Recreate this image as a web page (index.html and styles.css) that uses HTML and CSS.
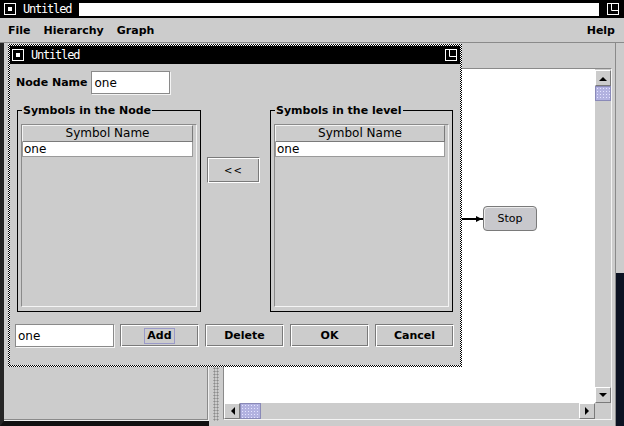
FILE: index.html
```html
<!DOCTYPE html>
<html>

<head>
  <link rel="stylesheet" href="styles.css">
</head>

<body>
  <div class="frame">
    <div class="titlebar">
      <svg class="win-icon" width="12" height="12" viewBox="0 0 12 12">
        <rect x="0.5" y="0.5" width="11" height="11" fill="#000" stroke="#fff" />
        <rect x="4" y="4" width="4" height="4" fill="#fff" />
      </svg>
      <span class="title-text">Untitled</span>
      <span class="title-field"></span>
      <svg class="max-icon" width="12" height="12" viewBox="0 0 12 12">
        <rect x="0.5" y="0.5" width="11" height="11" fill="none" stroke="#fff" />
        <path d="M4.5 0.5V7.5H11.5" fill="none" stroke="#fff" />
      </svg>
    </div>

    <div class="menubar">
      <span>File</span>
      <span>Hierarchy</span>
      <span>Graph</span>
      <span class="menu-help">Help</span>
    </div>

    <div class="workspace">
      <div class="left-pane"></div>
      <div class="splitter"><div class="grip"></div></div>
      <div class="right-pane">
        <div class="toolbar"></div>
        <div class="viewport">
          <div class="view-row">
            <div class="canvas">
              <div class="edge"></div>
              <div class="node">Stop</div>
            </div>
            <div class="vscroll">
              <div class="arrow-btn">
                <svg width="8" height="5" viewBox="0 0 8 5"><path d="M0 5L4 1L8 5Z" fill="#000" /></svg>
              </div>
              <div class="thumb thumb-v"></div>
              <div class="track"></div>
              <div class="arrow-btn">
                <svg width="8" height="5" viewBox="0 0 8 5"><path d="M0 0L4 4L8 0Z" fill="#000" /></svg>
              </div>
            </div>
          </div>
          <div class="hscroll-row">
            <div class="hscroll">
              <div class="arrow-btn">
                <svg width="5" height="8" viewBox="0 0 5 8"><path d="M5 0L1 4L5 8Z" fill="#000" /></svg>
              </div>
              <div class="thumb thumb-h"></div>
              <div class="track"></div>
              <div class="arrow-btn">
                <svg width="5" height="8" viewBox="0 0 5 8"><path d="M0 0L4 4L0 8Z" fill="#000" /></svg>
              </div>
            </div>
            <div class="corner"></div>
          </div>
        </div>
      </div>
      <div class="right-frame"></div>
    </div>
  </div>

  <div class="dialog">
    <div class="dialog-inner">
      <div class="dialog-title">
        <svg class="win-icon" width="12" height="12" viewBox="0 0 12 12">
          <rect x="0.5" y="0.5" width="11" height="11" fill="#000" stroke="#fff" />
          <rect x="4" y="4" width="4" height="4" fill="#fff" />
        </svg>
        <span class="title-text">Untitled</span>
        <svg class="max-icon" width="12" height="12" viewBox="0 0 12 12">
          <rect x="0.5" y="0.5" width="11" height="11" fill="none" stroke="#fff" />
          <path d="M4.5 0.5V7.5H11.5" fill="none" stroke="#fff" />
        </svg>
      </div>

      <div class="name-row">
        <label for="node-name">Node Name</label>
        <input type="text" id="node-name" class="field name-field" value="one">
      </div>

      <div class="groups">
        <fieldset class="group">
          <legend>Symbols in the Node</legend>
          <div class="list">
            <div class="list-head">Symbol Name</div>
            <div class="list-row">one</div>
          </div>
        </fieldset>

        <button class="btn move-btn">&lt;&lt;</button>

        <fieldset class="group group-level">
          <legend>Symbols in the level</legend>
          <div class="list">
            <div class="list-head">Symbol Name</div>
            <div class="list-row">one</div>
          </div>
        </fieldset>
      </div>

      <div class="action-row">
        <input type="text" class="field symbol-field" value="one">
        <button class="btn"><span class="focus">Add</span></button>
        <button class="btn">Delete</button>
        <button class="btn">OK</button>
        <button class="btn">Cancel</button>
      </div>
    </div>
  </div>
</body>

</html>
```

FILE: styles.css
```css
body {
  margin: 0;
  width: 624px;
  height: 426px;
  overflow: hidden;
  position: relative;
  background: #cccccc;
  font-family: "DejaVu Sans", sans-serif;
  color: #000;
}

.frame {
  display: flex;
  flex-direction: column;
  height: 426px;
}

/* window title bars */

.titlebar,
.dialog-title {
  height: 18px;
  background: #000;
  color: #fff;
  display: flex;
  align-items: center;
}

.win-icon {
  margin-left: 4px;
  flex-shrink: 0;
}

.title-text {
  font-family: "DejaVu Sans Mono", monospace;
  font-size: 12px;
  letter-spacing: -1.2px;
  margin-left: 7px;
  width: 56px;
}

.title-field {
  width: 520px;
  height: 13px;
  background: #fff;
}

.max-icon {
  margin-left: 8px;
}

/* menu */

.menubar {
  height: 24px;
  border-bottom: 1px solid #8a8a8a;
  display: flex;
  align-items: center;
  gap: 13px;
  padding: 0 9px 0 8px;
  font-size: 11px;
  font-weight: bold;
}

.menu-help {
  margin-left: auto;
}

/* main window body */

.workspace {
  flex: 1;
  display: flex;
}

.left-pane {
  width: 205px;
  border-left: 4px solid #262626;
  border-bottom: 5px solid #111;
  box-shadow: inset -1px -1px #f0f0f0, inset -2px -2px #8a8a8a;
}

.splitter {
  width: 13px;
  display: flex;
  justify-content: center;
  padding-bottom: 5px;
}

.grip {
  width: 6px;
  background-image: radial-gradient(#8a8a8a 45%, transparent 50%);
  background-size: 3px 3px;
}

.right-pane {
  flex: 1;
  display: flex;
  flex-direction: column;
  padding: 0 3px 6px 1px;
  border-right: 1px solid #8a8a8a;
}

.toolbar {
  height: 25px;
}

.viewport {
  flex: 1;
  display: flex;
  flex-direction: column;
  border: 1px solid;
  border-color: #8a8a8a #f4f4f4 #f4f4f4 #8a8a8a;
}

.view-row {
  flex: 1;
  display: flex;
}

.canvas {
  flex: 1;
  background: #fff;
  position: relative;
}

.edge {
  position: absolute;
  left: 200px;
  top: 149px;
  width: 59px;
  height: 2px;
  background: #000;
}

.edge::after {
  content: "";
  position: absolute;
  right: 1px;
  top: -2px;
  border-left: 6px solid #000;
  border-top: 3px solid transparent;
  border-bottom: 3px solid transparent;
}

.node {
  position: absolute;
  left: 259px;
  top: 137px;
  width: 54px;
  height: 25px;
  box-sizing: border-box;
  border: 1px solid #7a7a7a;
  border-radius: 4px;
  background: #c8c8cc;
  box-shadow: inset 1px 1px #ececec;
  display: flex;
  align-items: center;
  justify-content: center;
  font-size: 11px;
}

/* scrollbars */

.vscroll {
  width: 16px;
  display: flex;
  flex-direction: column;
  padding-top: 1px;
}

.hscroll-row {
  height: 16px;
  display: flex;
}

.hscroll {
  flex: 1;
  display: flex;
}

.corner {
  width: 16px;
}

.arrow-btn {
  width: 16px;
  height: 16px;
  box-sizing: border-box;
  border: 1px solid;
  border-color: #fff #7a7a7a #7a7a7a #fff;
  display: flex;
  align-items: center;
  justify-content: center;
  flex-shrink: 0;
}

.track {
  flex: 1;
}

.thumb {
  box-sizing: border-box;
  border: 1px solid #8a8ab8;
  background-color: #b2b2e0;
  background-image: radial-gradient(#e4e4ff 35%, transparent 45%);
  background-size: 3px 3px;
}

.thumb-v {
  height: 15px;
}

.thumb-h {
  width: 21px;
}

.right-frame {
  width: 8px;
  background: linear-gradient(#cccccc 0 60%, #0c1222 60%);
}

/* dialog */

.dialog {
  position: absolute;
  left: 8px;
  top: 44px;
  width: 454px;
  height: 323px;
  box-sizing: border-box;
  padding: 2px;
  background: repeating-conic-gradient(#000 0 25%, #fff 0 50%) 0 0 / 2px 2px;
}

.dialog-inner {
  height: 100%;
  background: #cccccc;
  display: flex;
  flex-direction: column;
}

.dialog-title .win-icon {
  margin-left: 2px;
}

.dialog-title .title-text {
  width: auto;
}

.dialog-title .max-icon {
  margin-left: auto;
  margin-right: 3px;
}

.name-row {
  display: flex;
  align-items: center;
  margin-top: 7px;
  padding-left: 6px;
  font-size: 11px;
  font-weight: bold;
}

.field {
  height: 23px;
  box-sizing: border-box;
  border: 1px solid #8a8a8a;
  box-shadow: 1px 1px #f4f4f4;
  background: #fff;
  padding: 0 2px;
  margin: 0;
  font-family: "DejaVu Sans", sans-serif;
  font-size: 12px;
  outline: none;
}

.name-field {
  width: 79px;
  margin-left: 4px;
}

.groups {
  display: flex;
  margin: 10px 0 0 7px;
}

.group {
  width: 184px;
  height: 208px;
  box-sizing: border-box;
  margin: 0;
  padding: 7px 3px 3px;
  min-width: 0;
  border: 1px solid #000;
}

.group-level {
  width: 183px;
}

.group legend {
  padding: 0 1px;
  margin-left: 1px;
  font-size: 11px;
  font-weight: bold;
  line-height: 13px;
}

.list {
  height: 183px;
  box-sizing: border-box;
  border: 1px solid;
  border-color: #8a8a8a #f4f4f4 #f4f4f4 #8a8a8a;
  padding-right: 3px;
}

.list-head {
  height: 17px;
  box-sizing: border-box;
  border: 1px solid;
  border-color: #f4f4f4 #7a7a7a #7a7a7a #f4f4f4;
  text-align: center;
  font-size: 12px;
  line-height: 15px;
}

.list-row {
  height: 15px;
  box-sizing: border-box;
  background: #fff;
  border: 1px solid #9a9a9a;
  border-top: 0;
  padding-left: 1px;
  font-size: 12px;
  line-height: 14px;
}

.btn {
  height: 23px;
  width: 79px;
  box-sizing: border-box;
  padding: 0;
  background: #cccccc;
  border: 1px solid;
  border-color: #7a7a7a #fff #fff #7a7a7a;
  box-shadow: inset 1px 1px #fff, inset -1px -1px #7a7a7a;
  font-family: "DejaVu Sans", sans-serif;
  font-size: 11px;
  font-weight: bold;
  color: #000;
}

.move-btn {
  width: 53px;
  height: 26px;
  margin: 53px 10px 0 6px;
  font-weight: normal;
  font-size: 10px;
  letter-spacing: 1px;
}

.focus {
  display: inline-block;
  border: 1px solid #9a9ac8;
  padding: 0 2px;
  line-height: 14px;
}

.action-row {
  display: flex;
  gap: 6px;
  margin: 12px 0 0 5px;
}

.symbol-field {
  width: 99px;
}
```
